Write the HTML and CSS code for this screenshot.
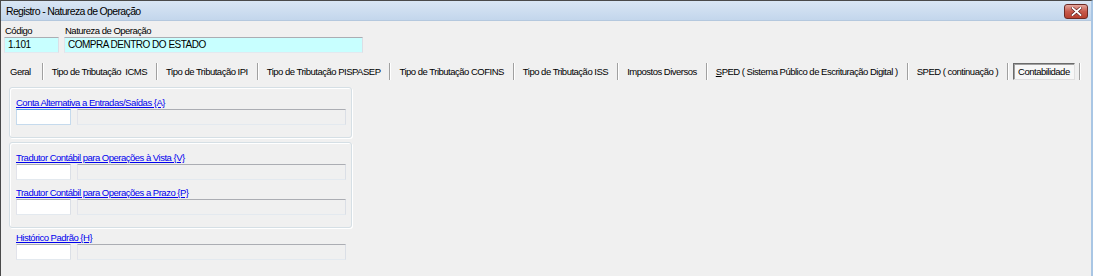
FILE: index.html
```html
<!DOCTYPE html>
<html lang="pt-BR">
<head>
    <meta charset="UTF-8">
    <title>Registro - Natureza de Operação</title>
    <link rel="stylesheet" href="styles.css">
</head>
<body>
    <div class="window">
        <div class="titlebar">
            <span class="title">Registro - Natureza de Operação</span>
            <span class="close">
                <svg width="11" height="9" viewBox="0 0 11 9">
                    <path d="M1.5 1 L9.5 8 M9.5 1 L1.5 8" stroke="#5a1a1a" stroke-width="3" stroke-linecap="square"/>
                    <path d="M1.5 1 L9.5 8 M9.5 1 L1.5 8" stroke="#ffffff" stroke-width="1.8" stroke-linecap="square"/>
                </svg>
            </span>
        </div>

        <div class="client">
            <div class="header">
                <div class="field code">
                    <span class="label">Código</span>
                    <div class="input cyan">1.101</div>
                </div>
                <div class="field nature">
                    <span class="label">Natureza de Operação</span>
                    <div class="input cyan">COMPRA DENTRO DO ESTADO</div>
                </div>
            </div>

            <div class="tabs">
                <span class="tab">Geral</span>
                <span class="tab">Tipo de Tributação &nbsp;ICMS</span>
                <span class="tab">Tipo de Tributação IPI</span>
                <span class="tab">Tipo de Tributação PISPASEP</span>
                <span class="tab">Tipo de Tributação COFINS</span>
                <span class="tab">Tipo de Tributação ISS</span>
                <span class="tab">Impostos Diversos</span>
                <span class="tab"><u>S</u>PED ( Sistema Público de Escrituração Digital )</span>
                <span class="tab">SPED ( continuação )</span>
                <span class="tab active"><span class="tab-box">Contabilidade</span></span>
            </div>

            <div class="page">
                <div class="group first">
                    <a class="link">Conta Alternativa a Entradas/Saídas {A}</a>
                    <div class="row">
                        <div class="input code-box focus"></div>
                        <div class="input desc-box"></div>
                    </div>
                </div>

                <div class="group second">
                    <a class="link">Tradutor Contábil para Operações à Vista {V}</a>
                    <div class="row">
                        <div class="input code-box"></div>
                        <div class="input desc-box"></div>
                    </div>
                    <a class="link">Tradutor Contábil para Operações a Prazo {P}</a>
                    <div class="row">
                        <div class="input code-box"></div>
                        <div class="input desc-box"></div>
                    </div>
                </div>

                <div class="loose">
                    <a class="link">Histórico Padrão {H}</a>
                    <div class="row">
                        <div class="input code-box"></div>
                        <div class="input desc-box"></div>
                    </div>
                </div>
            </div>
        </div>
    </div>
</body>
</html>
```

FILE: styles.css
```css
html, body { margin: 0; padding: 0; }
body {
    width: 1093px;
    height: 276px;
    overflow: hidden;
    background: #f0f0f0;
    font-family: "Liberation Sans", Arial, sans-serif;
    font-size: 9.5px;
    letter-spacing: -0.5px;
    color: #000;
}

.window {
    height: 276px;
    border-left: 1px solid #4a4a4a;
    border-right: 2px solid #a9c6e4;
    border-top: 1px solid #4a4a4a;
    box-sizing: border-box;
    display: flex;
    flex-direction: column;
}

/* barra de titulo */
.titlebar {
    height: 19px;
    display: flex;
    align-items: center;
    justify-content: space-between;
    padding: 0 3px 0 5px;
    background: linear-gradient(#d9e6f4, #c3d6ec);
    border-bottom: 1px solid #b4c8de;
}
.title { font-size: 10.5px; letter-spacing: -0.65px; color: #000; }
.close {
    width: 24px;
    height: 15px;
    margin-top: 2px;
    display: flex;
    align-items: center;
    justify-content: center;
    border: 1px solid #6d2b25;
    border-radius: 3px;
    background: linear-gradient(#e5a89e, #c75a4c 50%, #b7402f);
    box-sizing: border-box;
}

.client { flex: 1; padding: 3px 0 0 3px; }

/* cabecalho */
.header { display: flex; gap: 5px; }
.field { display: flex; flex-direction: column; }
.label { padding-left: 1px; line-height: 13px; }
.code .input { width: 55px; }
.nature .input { width: 299px; }

.input {
    height: 16px;
    box-sizing: border-box;
    border: 1px solid;
    border-color: #abadb3 #dbdfe6 #e3e9ef #e2e3ea;
    background: #fff;
    padding: 0 3px;
    line-height: 14px;
}
.input.cyan { background: #c8ffff; font-size: 10px; }

/* abas */
.tabs {
    display: flex;
    align-items: center;
    height: 18px;
    margin-top: 9px;
}
.tab {
    padding: 0 9px;
    border-right: 1px solid #a0a0a0;
    box-shadow: 1px 0 0 #fff;
    line-height: 17px;
    white-space: nowrap;
}
.tab:first-child { padding-left: 6px; padding-right: 11px; }
.tab.active { padding: 0 4px 0 5px; }
.tab-box {
    display: block;
    padding: 0 4px;
    border: 1px solid;
    border-color: #6b6b6b #e0e0e0 #e0e0e0 #6b6b6b;
    box-shadow: inset 1px 1px 0 #a0a0a0;
    background: #f7f7f7;
    line-height: 15px;
}

/* conteudo da aba */
.page { padding: 7px 0 0 5px; display: flex; flex-direction: column; }
.group {
    width: 343px;
    box-sizing: border-box;
    border: 1px solid #d5dfe5;
    border-radius: 3px;
    box-shadow: inset 1px 1px 0 #fff, 1px 1px 0 #fff;
    padding: 8px 0 0 6px;
}
.group.first { height: 51px; }
.group.second { height: 86px; margin-top: 4px; }
.loose { padding: 3px 0 0 7px; }

.link {
    display: block;
    color: #0000ee;
    text-decoration: underline;
    line-height: 13px;
}
.row { display: flex; gap: 6px; margin-bottom: 6px; }
.code-box { width: 55px; }
.code-box.focus { border-color: #569de5 #c5daed #c5daed #c5daed; }
.desc-box { width: 269px; background: #f0f0f0; }
```
